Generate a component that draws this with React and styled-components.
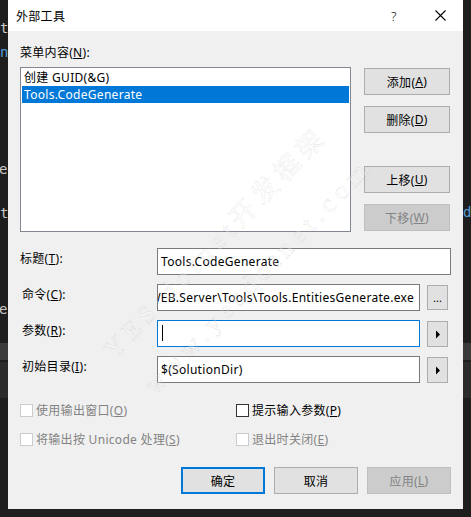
import React from "react";
import styled, { createGlobalStyle } from "styled-components";

const Global = createGlobalStyle`
  html, body { margin: 0; padding: 0; background: #1e1e1e; }
  * { box-sizing: border-box; }
`;

const UI_FONT = `"Noto Sans", "Noto Sans CJK SC", sans-serif`;

const Page = styled.div`
  position: relative;
  width: 471px;
  height: 517px;
  overflow: hidden;
  background: #1e1e1e;
  padding-left: 8px;
  font-family: ${UI_FONT};
  font-size: 12px;
  letter-spacing: 0.3px;
  color: #000;
`;

const BgGlyph = styled.span`
  position: absolute;
  font-family: "DejaVu Sans Mono", monospace;
  font-size: 14px;
  line-height: 1;
  letter-spacing: 0;
  color: ${(p) => p.$c || "#c8c8c8"};
`;

const BgBand = styled.div`
  position: absolute;
  left: 0;
  width: 471px;
  background: ${(p) => p.$bg};
`;

const Dialog = styled.div`
  position: relative;
  width: 455px;
  height: 509px;
  background: #f0f0f0;
  display: flex;
  flex-direction: column;
`;

const TitleBar = styled.div`
  height: 31px;
  background: #fff;
  display: flex;
  align-items: center;
  padding-left: 8px;
`;

const TitleText = styled.div`
  flex: 1;
  font-size: 12px;
`;

const TitleBtn = styled.div`
  width: 46px;
  height: 31px;
  display: flex;
  align-items: center;
  justify-content: center;
  font-size: 13px;
  font-weight: 300;
`;

const Body = styled.div`
  padding: 14px 12px 0 12px;
  display: flex;
  flex-direction: column;
`;

const Label = styled.div`
  line-height: 16px;
  height: 16px;
  white-space: nowrap;
`;

const TopSection = styled.div`
  display: flex;
  gap: 13px;
  margin-top: 6px;
`;

const ListBox = styled.div`
  width: 331px;
  height: 165px;
  background: #fff;
  border: 1px solid #828790;
  padding: 1px;
`;

const ListItem = styled.div`
  height: 17px;
  line-height: 17px;
  padding-left: 2px;
  white-space: nowrap;
  background: ${(p) => (p.$selected ? "#0078d7" : "transparent")};
  color: ${(p) => (p.$selected ? "#fff" : "#000")};
`;

const SideButtons = styled.div`
  display: flex;
  flex-direction: column;
  padding-top: 1px;
`;

const Button = styled.div`
  width: 86px;
  height: 27px;
  display: flex;
  align-items: center;
  justify-content: center;
  background: ${(p) => (p.$disabled ? "#cccccc" : "#e1e1e1")};
  border: ${(p) => (p.$default ? "2px solid #0078d7" : p.$disabled ? "1px solid #bfbfbf" : "1px solid #adadad")};
  color: ${(p) => (p.$disabled ? "#838383" : "#000")};
  margin-top: ${(p) => p.$mt || 0}px;
  white-space: nowrap;
`;

const FormGrid = styled.div`
  display: grid;
  grid-template-columns: 137px 263px 7px 21px;
  grid-auto-rows: 27px;
  row-gap: 9px;
  margin-top: 16px;
  align-items: start;
`;

const FieldLabel = styled.div`
  grid-column: 1;
  padding-left: ${(p) => p.$indent || 0}px;
  padding-top: 3px;
  line-height: 16px;
  white-space: nowrap;
`;

const Input = styled.div`
  grid-column: ${(p) => (p.$wide ? "2 / span 3" : "2")};
  width: ${(p) => (p.$wide ? "294px" : "263px")};
  height: 27px;
  background: #fff;
  border: 1px solid ${(p) => (p.$focused ? "#0078d7" : "#7a7a7a")};
  display: flex;
  align-items: center;
  justify-content: ${(p) => (p.$alignEnd ? "flex-end" : "flex-start")};
  padding: 0 5px 1px 3px;
  overflow: hidden;
  white-space: nowrap;
`;

const Caret = styled.span`
  display: inline-block;
  width: 1px;
  height: 16px;
  background: #000;
  margin-left: 1px;
`;

const SmallButton = styled.div`
  grid-column: 4;
  width: 21px;
  height: ${(p) => p.$h || 26}px;
  margin-top: ${(p) => p.$mt || 0}px;
  background: #e1e1e1;
  border: 1px solid #adadad;
  display: flex;
  align-items: center;
  justify-content: center;
  font-size: 11px;
  line-height: 1;
  letter-spacing: 0;
`;

const Checks = styled.div`
  display: grid;
  grid-template-columns: 216px 1fr;
  grid-auto-rows: 17px;
  row-gap: 12px;
  margin-top: 19px;
`;

const CheckRow = styled.div`
  display: flex;
  align-items: center;
  gap: 3px;
  color: ${(p) => (p.$disabled ? "#838383" : "#000")};
  white-space: nowrap;
`;

const Box = styled.span`
  width: 13px;
  height: 13px;
  background: #fff;
  border: 1px solid ${(p) => (p.$disabled ? "#cccccc" : "#333333")};
  flex: none;
`;

const CheckText = styled.span`
  line-height: 17px;
`;

const Footer = styled.div`
  display: flex;
  gap: 9px;
  padding-left: 161px;
  margin-top: 19px;
`;

const Watermark = styled.div`
  position: absolute;
  left: ${(p) => p.$x}px;
  top: ${(p) => p.$y}px;
  transform-origin: 0 100%;
  transform: rotate(${(p) => p.$r}deg);
  font-family: "Liberation Serif", "Noto Sans CJK SC", serif;
  font-size: 26px;
  letter-spacing: ${(p) => p.$ls}px;
  line-height: 30px;
  white-space: nowrap;
  color: rgba(255, 255, 255, 0.3);
  -webkit-text-stroke: 0.45px rgba(160, 160, 160, 0.3);
  pointer-events: none;
`;

const M = ({ children }) => <u>{children}</u>;

const Arrow = () => (
  <svg width="6" height="9" viewBox="0 0 6 9">
    <path d="M1 0.5 L5 4.5 L1 8.5 Z" fill="#000" />
  </svg>
);

export default function App() {
  return (
    <>
      <Global />
      <Page>
        <BgGlyph style={{ left: 0, top: 21 }}>t</BgGlyph>
        <BgGlyph style={{ left: 0, top: 45 }} $c="#569cd6">n</BgGlyph>
        <BgGlyph style={{ left: -1, top: 162 }}>e</BgGlyph>
        <BgGlyph style={{ left: 0, top: 206 }}>t</BgGlyph>
        <BgGlyph style={{ left: -1, top: 302 }}>e</BgGlyph>
        <BgGlyph style={{ left: 463, top: 205 }} $c="#569cd6">d</BgGlyph>
        <BgBand $bg="#3a3a3a" style={{ top: 343, height: 17 }} />
        <BgBand $bg="#2b2b2b" style={{ top: 362, height: 36 }} />
        <Dialog>
          <TitleBar>
            <TitleText>外部工具</TitleText>
            <TitleBtn>?</TitleBtn>
            <TitleBtn>
              <svg width="11" height="11" viewBox="0 0 11 11">
                <path d="M0.5 0.5 L10.5 10.5 M10.5 0.5 L0.5 10.5" stroke="#000" strokeWidth="1.1" />
              </svg>
            </TitleBtn>
          </TitleBar>
          <Body>
            <Label>
              菜单内容(<M>N</M>):
            </Label>
            <TopSection>
              <ListBox>
                <ListItem>创建 GUID(&amp;G)</ListItem>
                <ListItem $selected>Tools.CodeGenerate</ListItem>
              </ListBox>
              <SideButtons>
                <Button>
                  添加(<M>A</M>)
                </Button>
                <Button $mt={11}>
                  删除(<M>D</M>)
                </Button>
                <Button $mt={33}>
                  上移(<M>U</M>)
                </Button>
                <Button $mt={11} $disabled>
                  下移(<M>W</M>)
                </Button>
              </SideButtons>
            </TopSection>
            <FormGrid>
              <FieldLabel>
                标题(<M>T</M>):
              </FieldLabel>
              <Input $wide>Tools.CodeGenerate</Input>

              <FieldLabel $indent={2}>
                命令(<M>C</M>):
              </FieldLabel>
              <Input $alignEnd>WEB.Server\Tools\Tools.EntitiesGenerate.exe</Input>
              <SmallButton $h={25} $mt={1}>...</SmallButton>

              <FieldLabel $indent={2}>
                参数(<M>R</M>):
              </FieldLabel>
              <Input $focused>
                <Caret />
              </Input>
              <SmallButton $mt={1}>
                <Arrow />
              </SmallButton>

              <FieldLabel $indent={2}>
                初始目录(<M>I</M>):
              </FieldLabel>
              <Input>$(SolutionDir)</Input>
              <SmallButton $mt={1}>
                <Arrow />
              </SmallButton>
            </FormGrid>
            <Checks>
              <CheckRow $disabled>
                <Box $disabled />
                <CheckText>
                  使用输出窗口(<M>O</M>)
                </CheckText>
              </CheckRow>
              <CheckRow>
                <Box />
                <CheckText>
                  提示输入参数(<M>P</M>)
                </CheckText>
              </CheckRow>
              <CheckRow $disabled>
                <Box $disabled />
                <CheckText>
                  将输出按 Unicode 处理(<M>S</M>)
                </CheckText>
              </CheckRow>
              <CheckRow $disabled>
                <Box $disabled />
                <CheckText>
                  退出时关闭(<M>E</M>)
                </CheckText>
              </CheckRow>
            </Checks>
            <Footer>
              <Button $default>确定</Button>
              <Button>取消</Button>
              <Button $disabled>
                应用(<M>L</M>)
              </Button>
            </Footer>
          </Body>
          <Watermark $x={112} $y={334} $r={-46} $ls={6}>
            YES dotnet开发框架
          </Watermark>
          <Watermark $x={152} $y={370} $r={-46} $ls={6}>
            www.yesdotnet.com
          </Watermark>
        </Dialog>
      </Page>
    </>
  );
}
